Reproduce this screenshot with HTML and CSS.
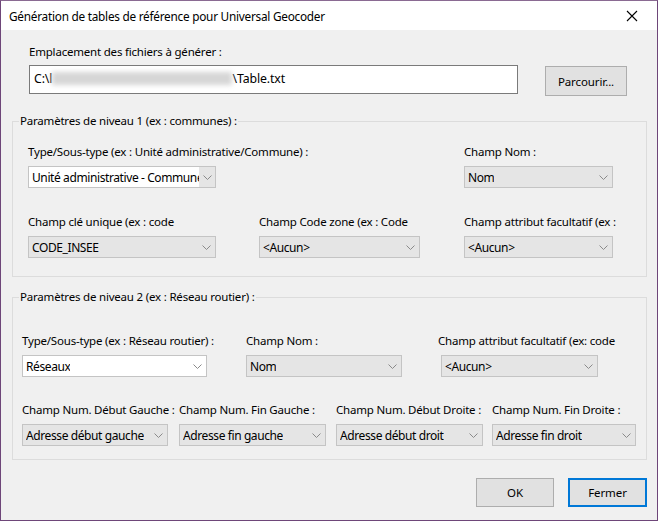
FILE: index.html
```html
<!DOCTYPE html>
<html lang="fr">
<head>
<meta charset="utf-8">
<title>Génération de tables de référence pour Universal Geocoder</title>
<link rel="stylesheet" href="styles.css">
</head>
<body>
<div class="window">
  <div class="titlebar">
    <span class="title">Génération de tables de référence pour Universal Geocoder</span>
    <svg class="close" width="12" height="12" viewBox="0 0 12 12"><path d="M1 1 L11 11 M11 1 L1 11" stroke="#000" stroke-width="1.1" fill="none"/></svg>
  </div>
  <div class="content">
    <div class="path-section">
      <div class="label">Emplacement des fichiers à générer :</div>
      <div class="path-row">
        <div class="textbox">C:\l<span class="blur"></span>\Table.txt</div>
        <button class="btn browse">Parcourir...</button>
      </div>
    </div>

    <fieldset class="group g1">
      <legend>Paramètres de niveau 1 (ex : communes) :</legend>
      <div class="group-body">
        <div class="row g1-row">
          <div class="field">
            <div class="label">Type/Sous-type (ex : Unité administrative/Commune) :</div>
            <div class="combo editable w188"><span class="val">Unité administrative - Commune</span><span class="arrowbox"><svg width="9" height="5" viewBox="0 0 9 5"><path d="M0.5 0.5 L4.5 4.5 L8.5 0.5" stroke="#8a8a8a" fill="none"/></svg></span></div>
          </div>
          <div class="field col3">
            <div class="label">Champ Nom :</div>
            <div class="combo w149"><span class="val">Nom</span><svg width="9" height="5" viewBox="0 0 9 5"><path d="M0.5 0.5 L4.5 4.5 L8.5 0.5" stroke="#8a8a8a" fill="none"/></svg></div>
          </div>
        </div>
        <div class="row g1-row r2">
          <div class="field">
            <div class="label">Champ clé unique (ex : code</div>
            <div class="combo w188"><span class="val">CODE_INSEE</span><svg width="9" height="5" viewBox="0 0 9 5"><path d="M0.5 0.5 L4.5 4.5 L8.5 0.5" stroke="#8a8a8a" fill="none"/></svg></div>
          </div>
          <div class="field">
            <div class="label">Champ Code zone (ex : Code</div>
            <div class="combo w161"><span class="val">&lt;Aucun&gt;</span><svg width="9" height="5" viewBox="0 0 9 5"><path d="M0.5 0.5 L4.5 4.5 L8.5 0.5" stroke="#8a8a8a" fill="none"/></svg></div>
          </div>
          <div class="field">
            <div class="label">Champ attribut facultatif (ex :</div>
            <div class="combo w149"><span class="val">&lt;Aucun&gt;</span><svg width="9" height="5" viewBox="0 0 9 5"><path d="M0.5 0.5 L4.5 4.5 L8.5 0.5" stroke="#8a8a8a" fill="none"/></svg></div>
          </div>
        </div>
      </div>
    </fieldset>

    <fieldset class="group g2">
      <legend>Paramètres de niveau 2 (ex : Réseau routier) :</legend>
      <div class="group-body">
        <div class="row g2-row1">
          <div class="field">
            <div class="label">Type/Sous-type (ex : Réseau routier) :</div>
            <div class="combo white w185"><span class="val">Réseaux</span><svg width="9" height="5" viewBox="0 0 9 5"><path d="M0.5 0.5 L4.5 4.5 L8.5 0.5" stroke="#8a8a8a" fill="none"/></svg></div>
          </div>
          <div class="field">
            <div class="label">Champ Nom :</div>
            <div class="combo w156"><span class="val">Nom</span><svg width="9" height="5" viewBox="0 0 9 5"><path d="M0.5 0.5 L4.5 4.5 L8.5 0.5" stroke="#8a8a8a" fill="none"/></svg></div>
          </div>
          <div class="field">
            <div class="label">Champ attribut facultatif (ex: code</div>
            <div class="combo w157 shift3"><span class="val">&lt;Aucun&gt;</span><svg width="9" height="5" viewBox="0 0 9 5"><path d="M0.5 0.5 L4.5 4.5 L8.5 0.5" stroke="#8a8a8a" fill="none"/></svg></div>
          </div>
        </div>
        <div class="row g2-row2">
          <div class="field">
            <div class="label">Champ Num. Début Gauche :</div>
            <div class="combo w146"><span class="val">Adresse début gauche</span><svg width="9" height="5" viewBox="0 0 9 5"><path d="M0.5 0.5 L4.5 4.5 L8.5 0.5" stroke="#8a8a8a" fill="none"/></svg></div>
          </div>
          <div class="field">
            <div class="label">Champ Num. Fin Gauche :</div>
            <div class="combo w147"><span class="val">Adresse fin gauche</span><svg width="9" height="5" viewBox="0 0 9 5"><path d="M0.5 0.5 L4.5 4.5 L8.5 0.5" stroke="#8a8a8a" fill="none"/></svg></div>
          </div>
          <div class="field">
            <div class="label">Champ Num. Début Droite :</div>
            <div class="combo w147"><span class="val">Adresse début droit</span><svg width="9" height="5" viewBox="0 0 9 5"><path d="M0.5 0.5 L4.5 4.5 L8.5 0.5" stroke="#8a8a8a" fill="none"/></svg></div>
          </div>
          <div class="field">
            <div class="label">Champ Num. Fin Droite :</div>
            <div class="combo w144"><span class="val">Adresse fin droit</span><svg width="9" height="5" viewBox="0 0 9 5"><path d="M0.5 0.5 L4.5 4.5 L8.5 0.5" stroke="#8a8a8a" fill="none"/></svg></div>
          </div>
        </div>
      </div>
    </fieldset>

    <div class="footer">
      <button class="btn ok">OK</button>
      <button class="btn close-btn">Fermer</button>
    </div>
  </div>
</div>
</body>
</html>
```

FILE: styles.css
```css
* { box-sizing: border-box; }
html, body { margin: 0; padding: 0; }
body {
  font-family: "Noto Sans", "Liberation Sans", sans-serif;
  font-size: 11.5px;
  color: #000;
  background: #fff;
}
.window {
  width: 658px;
  height: 521px;
  border: 1px solid #6e4679;
  border-top-color: #8a6a92;
  background: #f0f0f0;
  display: flex;
  flex-direction: column;
  overflow: hidden;
}
.titlebar {
  height: 29px;
  flex: none;
  background: #fff;
  display: flex;
  align-items: center;
  justify-content: space-between;
  padding: 0 19px 0 8px;
}
.title { font-size: 11.8px; letter-spacing: -0.25px; }
.close { display: block; }
.content {
  flex: 1;
  padding: 14px 10px 0 11px;
  display: flex;
  flex-direction: column;
}
.label {
  font-size: 11.5px;
  line-height: 16px;
  white-space: nowrap;
  letter-spacing: -0.2px;
}
.path-section { padding-left: 17px; }
.path-row {
  display: flex;
  align-items: flex-start;
  margin-top: 5px;
}
.textbox {
  width: 489px;
  height: 29px;
  background: #fff;
  border: 1px solid #7a7a7a;
  font-size: 12.3px;
  letter-spacing: -0.1px;
  line-height: 20px;
  padding: 3px 0 0 4px;
  white-space: nowrap;
}
.blur {
  display: inline-block;
  width: 180px;
  height: 13px;
  vertical-align: -2px;
  background: #d6d6d6;
  filter: blur(2.5px);
}
.btn {
  font-family: inherit;
  font-size: 11.5px;
  letter-spacing: -0.1px;
  background: #e1e1e1;
  border: 1px solid #adadad;
  color: #000;
  padding: 0;
  margin: 0;
}
.browse {
  width: 82px;
  height: 30px;
  margin: 1px 0 0 27px;
}
.group {
  margin: 0;
  border: 1px solid #dcdcdc;
  padding: 0;
  width: 635px;
  min-width: 0;
}
.group legend {
  font-size: 11.5px;
  line-height: 16px;
  padding: 0 1px;
  margin-left: 6px;
  letter-spacing: -0.2px;
}
.g1 { margin-top: 17px; height: 164px; }
.g1 .group-body { padding: 15px 0 0 15px; }
.g2 { margin-top: 12px; height: 171px; }
.g2 .group-body { padding: 28px 0 0 9px; }
.row { display: grid; }
.g1-row { grid-template-columns: 231px 205px 160px; }
.g1-row .col3 { grid-column: 3; }
.g1-row.r2 { margin-top: 26px; }
.g2-row1 { grid-template-columns: 224px 192px 170px; }
.g2-row2 { grid-template-columns: 157px 157px 156px 150px; margin-top: 25px; }
.field .label { margin-bottom: 6px; }
.combo {
  height: 22px;
  background: #e5e5e5;
  border: 1px solid #c4c4c4;
  display: flex;
  align-items: center;
  justify-content: space-between;
  padding: 0 4px 0 3px;
  font-size: 12px;
  letter-spacing: -0.4px;
  white-space: nowrap;
  overflow: hidden;
}
.combo svg { flex: none; display: block; }
.combo .val { overflow: hidden; }
.combo.white { background: #fff; }
.combo.editable { padding: 0; background: #fff; }
.combo.editable .val { padding-left: 3px; flex: 1; }
.arrowbox {
  width: 16px;
  height: 100%;
  background: #e5e5e5;
  display: flex;
  align-items: center;
  justify-content: center;
  flex: none;
}
.shift3 { margin-left: 3px; }
.w188 { width: 188px; }
.w185 { width: 185px; }
.w161 { width: 161px; }
.w157 { width: 157px; }
.w156 { width: 156px; }
.w149 { width: 149px; }
.w147 { width: 147px; }
.w146 { width: 146px; }
.w144 { width: 144px; }
.footer {
  display: flex;
  justify-content: flex-end;
  gap: 14px;
  margin-top: 18px;
}
.ok { width: 78px; height: 29px; }
.close-btn { width: 79px; height: 29px; border: 2px solid #0078d7; }
```
